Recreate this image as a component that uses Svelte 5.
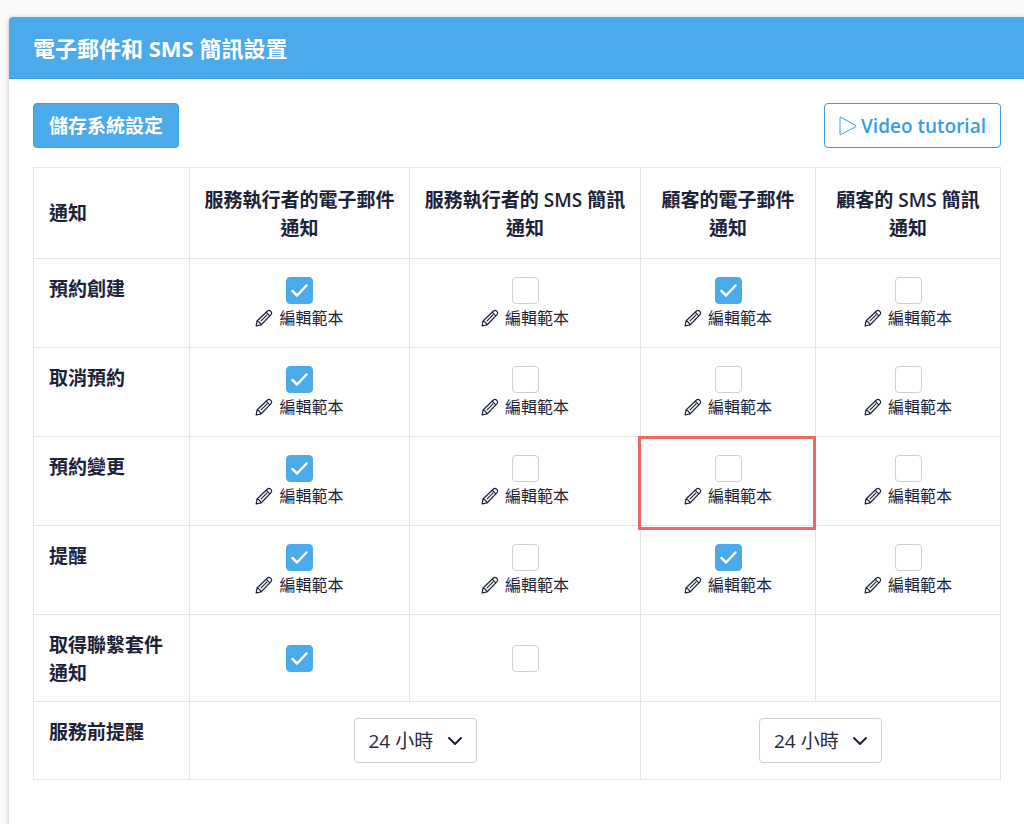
<script lang="ts">
  type Cell = { id: string; checked: boolean; highlighted?: boolean };
  type Row = { label: string; cells: Cell[] };

  const channels = [
    "服務執行者的電子郵件通知",
    "服務執行者的 SMS 簡訊通知",
    "顧客的電子郵件通知",
    "顧客的 SMS 簡訊通知",
  ];

  let rows: Row[] = $state([
    {
      label: "預約創建",
      cells: [
        { id: "create-provider-email", checked: true },
        { id: "create-provider-sms", checked: false },
        { id: "create-client-email", checked: true },
        { id: "create-client-sms", checked: false },
      ],
    },
    {
      label: "取消預約",
      cells: [
        { id: "cancel-provider-email", checked: true },
        { id: "cancel-provider-sms", checked: false },
        { id: "cancel-client-email", checked: false },
        { id: "cancel-client-sms", checked: false },
      ],
    },
    {
      label: "預約變更",
      cells: [
        { id: "change-provider-email", checked: true },
        { id: "change-provider-sms", checked: false },
        { id: "change-client-email", checked: false, highlighted: true },
        { id: "change-client-sms", checked: false },
      ],
    },
    {
      label: "提醒",
      cells: [
        { id: "remind-provider-email", checked: true },
        { id: "remind-provider-sms", checked: false },
        { id: "remind-client-email", checked: true },
        { id: "remind-client-sms", checked: false },
      ],
    },
  ]);

  let contactCells: Cell[] = $state([
    { id: "contact-provider-email", checked: true },
    { id: "contact-provider-sms", checked: false },
  ]);

  let reminders = $state([
    { id: "provider-hours", label: "服務執行者", value: "24" },
    { id: "client-hours", label: "顧客", value: "24" },
  ]);
</script>

{#snippet checkbox(cell: Cell, label: string)}
  <span class="check">
    <input
      type="checkbox"
      id={cell.id}
      aria-label={label}
      bind:checked={cell.checked}
    />
    <svg viewBox="0 0 27 27" aria-hidden="true">
      <path d="M6.5 14 11 18.5 20.5 8.5" />
    </svg>
  </span>
{/snippet}

<section class="card">
  <header>
    <h1>電子郵件和 SMS 簡訊設置</h1>
  </header>
  <div class="body">
    <div class="actions">
      <button type="button" class="save">儲存系統設定</button>
      <a class="video" href="#tutorial">
        <svg viewBox="0 0 18 20" aria-hidden="true">
          <path d="M1 2v16q0 1.2 1 .6L16.8 10.6q.8-.6 0-1.2L2 1.4Q1 .8 1 2Z" />
        </svg>
        Video tutorial
      </a>
    </div>

    <table>
      <colgroup>
        <col class="name" />
        <col class="provider-email" />
        <col class="provider-sms" />
        <col class="client-email" />
        <col class="client-sms" />
      </colgroup>
      <thead>
        <tr>
          <th scope="col" class="first">通知</th>
          {#each channels as channel}
            <th scope="col">{channel}</th>
          {/each}
        </tr>
      </thead>
      <tbody>
        {#each rows as row}
          <tr>
            <th scope="row">{row.label}</th>
            {#each row.cells as cell, i}
              <td class:highlighted={cell.highlighted}>
                {@render checkbox(cell, `${row.label} ${channels[i]}`)}
                <a class="edit" href="#{cell.id}">
                  <svg viewBox="0 0 18 18" aria-hidden="true">
                    <path d="M1.2 16.8 2 12 12.2 2.2q1.7-1.6 3.2-.2l.6.6q1.4 1.5-.2 3.2L6 16ZM2 12q3 .6 4 4M11.2 3.2l3.6 3.6M12.3 5.7 5.8 12.2" />
                  </svg>
                  編輯範本
                </a>
              </td>
            {/each}
          </tr>
        {/each}
        <tr>
          <th scope="row">取得聯繫套件通知</th>
          {#each contactCells as cell, i}
            <td class="middle">
              {@render checkbox(cell, `取得聯繫套件通知 ${channels[i]}`)}
            </td>
          {/each}
          <td></td>
          <td></td>
        </tr>
        <tr>
          <th scope="row">服務前提醒</th>
          {#each reminders as reminder}
            <td colspan="2" class="hours">
              <span class="select">
                <select
                  id={reminder.id}
                  aria-label="{reminder.label} 服務前提醒"
                  bind:value={reminder.value}
                >
                  <option value="24">24 小時</option>
                </select>
                <svg viewBox="0 0 16 16" aria-hidden="true">
                  <path d="m2 5 6 6 6-6" />
                </svg>
              </span>
            </td>
          {/each}
        </tr>
      </tbody>
    </table>
  </div>
</section>

<style>
  :global(body) {
    background: #fafafa;
    color: #1b2238;
    font-family: "Open Sans", "Noto Sans CJK TC", sans-serif;
    font-size: 19px;
    line-height: 28px;
  }

  .card {
    margin: 17px 0 0 9px;
    background: white;
    border-radius: 4px 0 0 0;
    box-shadow: 0 1px 5px rgba(0, 0, 0, 0.25);
  }

  header {
    padding: 17px 24px 16px;
    background: #4baae9;
    border-bottom: 1px solid #369ee6;
    border-radius: 4px 0 0 0;
    color: white;
  }

  h1 {
    margin: 0;
    font-size: 22px;
    font-weight: 700;
    line-height: 28px;
  }

  .body {
    padding: 24px 23px 48px 24px;
  }

  .actions {
    display: flex;
    justify-content: space-between;
    margin-bottom: 19px;
  }

  .save,
  .video {
    box-sizing: border-box;
    height: 45px;
    padding: 0 15px;
    border: 1px solid #369ee6;
    border-radius: 4px;
    font: inherit;
    font-weight: 600;
  }

  .save {
    background: #4baae9;
    color: white;
    font-weight: 700;
    cursor: pointer;
  }

  .video {
    display: flex;
    align-items: center;
    gap: 4px;
    padding: 0 14px;
    color: #369ee6;
    text-decoration: none;
  }

  .video svg {
    width: 18px;
    height: 20px;
    fill: none;
    stroke: currentColor;
  }

  table {
    width: 100%;
    table-layout: fixed;
    border-collapse: collapse;
  }

  /* Proportions of the columns, scaled to the table's width */
  .name {
    width: 156px;
  }

  .provider-email {
    width: 220px;
  }

  .provider-sms {
    width: 231px;
  }

  .client-email {
    width: 175px;
  }

  .client-sms {
    width: 185px;
  }

  th,
  td {
    border: 1px solid #e5e5e5;
  }

  th {
    padding: 18px 14px 16px;
    font-weight: 600;
  }

  tbody th {
    padding: 16px 15px 14px;
    text-align: left;
    vertical-align: top;
  }

  .first {
    padding: 15px;
    text-align: left;
  }

  td {
    position: relative;
    padding: 18px 15px 15px;
    text-align: center;
    vertical-align: top;
  }

  .middle {
    padding-bottom: 18px;
    vertical-align: middle;
  }

  .hours {
    padding: 16px 15px;
  }

  .highlighted::after {
    content: "";
    position: absolute;
    inset: -1px -1px -5px -3px;
    border: 3px solid #ea6a64;
    pointer-events: none;
  }

  .check {
    display: grid;
    justify-content: center;
  }

  .check input,
  .check svg {
    grid-area: 1 / 1;
    box-sizing: border-box;
    width: 27px;
    height: 27px;
    margin: 0;
  }

  .check input {
    appearance: none;
    background: white;
    border: 1px solid #d0d0d0;
    border-radius: 4px;
  }

  .check input:checked {
    background: #4baae9;
    border-color: #4baae9;
  }

  .check svg {
    fill: none;
    stroke: white;
    stroke-width: 2.5;
    stroke-linecap: round;
    stroke-linejoin: round;
    pointer-events: none;
  }

  .check input:not(:checked) + svg {
    visibility: hidden;
  }

  .edit {
    display: flex;
    align-items: center;
    justify-content: center;
    gap: 6px;
    color: inherit;
    font-size: 16px;
    text-decoration: none;
  }

  .edit svg {
    width: 18px;
    height: 18px;
    fill: none;
    stroke: currentColor;
    stroke-width: 1.2;
    stroke-linejoin: round;
  }

  .select {
    display: inline-grid;
    align-items: center;
    vertical-align: top;
  }

  select {
    grid-area: 1 / 1;
    appearance: none;
    box-sizing: border-box;
    height: 45px;
    padding: 0 42px 0 14px;
    background: white;
    border: 1px solid #cbd0d8;
    border-radius: 4px;
    color: #252b38;
    font: inherit;
  }

  .select svg {
    grid-area: 1 / 1;
    justify-self: end;
    width: 16px;
    height: 16px;
    margin-right: 14px;
    fill: none;
    stroke: #1b2238;
    stroke-width: 2;
    stroke-linecap: round;
    stroke-linejoin: round;
    pointer-events: none;
  }
</style>
